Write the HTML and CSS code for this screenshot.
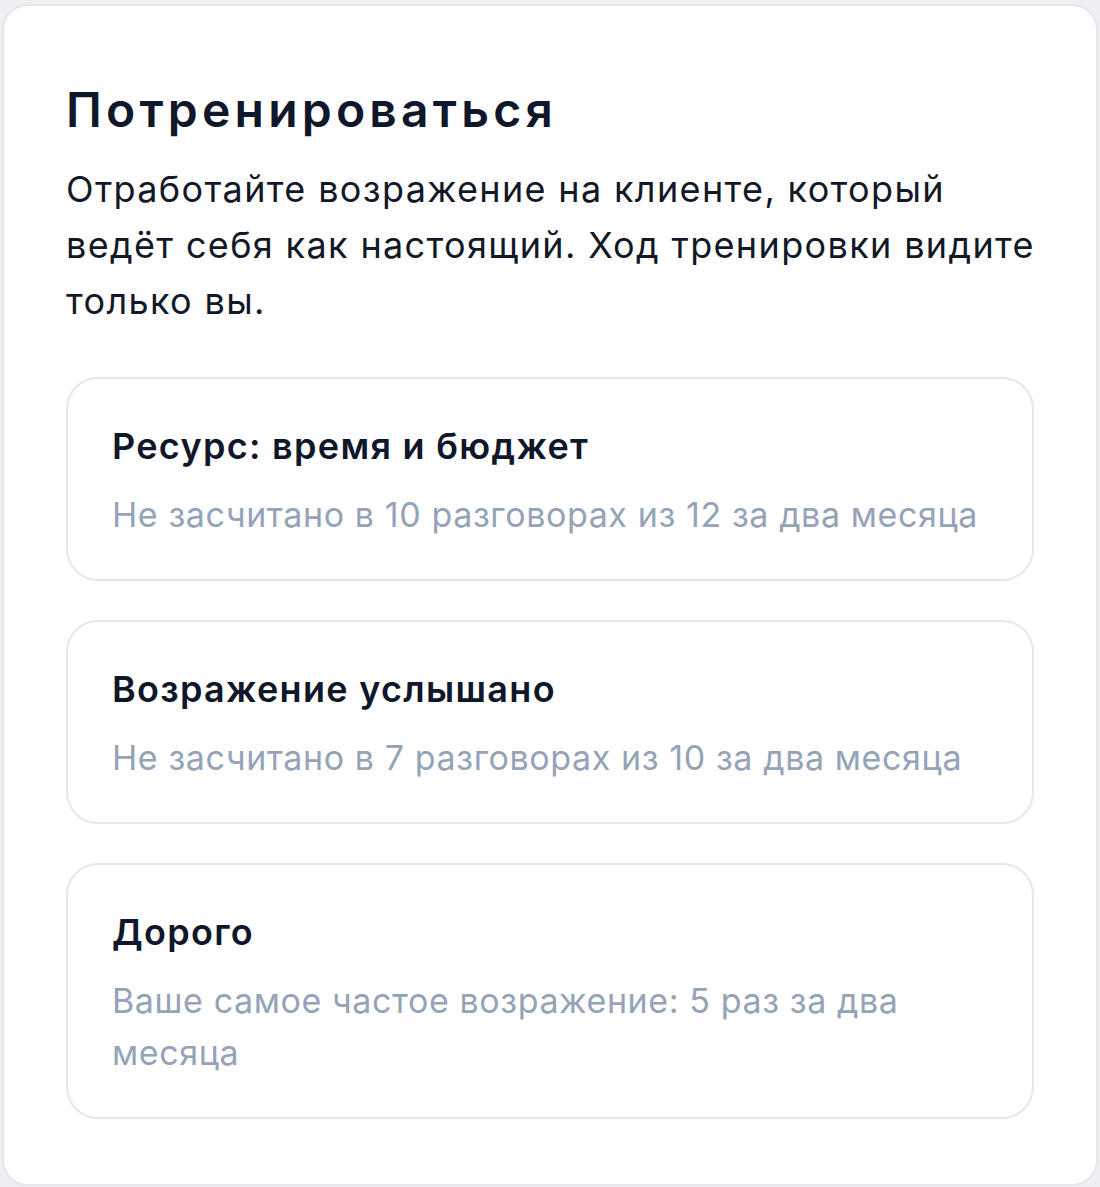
FILE: index.html
```html
<!DOCTYPE html>
<html lang="ru">
<head>
    <meta charset="UTF-8">
    <meta name="viewport" content="width=device-width, initial-scale=1.0">
    <title>Потренироваться</title>
    <link rel="stylesheet" href="styles.css">
</head>
<body>
    <div class="practice">
        <h2 class="practice-title">Потренироваться</h2>
        <p class="practice-text">Отработайте возражение на клиенте, который ведёт себя как настоящий. Ход тренировки видите только вы.</p>

        <div class="objections">
            <div class="objection">
                <h3>Ресурс: время и бюджет</h3>
                <p>Не засчитано в 10 разговорах из 12 за два месяца</p>
            </div>
            <div class="objection">
                <h3>Возражение услышано</h3>
                <p>Не засчитано в 7 разговорах из 10 за два месяца</p>
            </div>
            <div class="objection">
                <h3>Дорого</h3>
                <p>Ваше самое частое возражение: 5 раз за два месяца</p>
            </div>
        </div>
    </div>
</body>
</html>
```

FILE: styles.css
```css
body {
    margin: 0;
    padding: 4px 2px 5px;
    background-color: #eef0f3;
    font-family: Inter, "Noto Sans", sans-serif;
    color: #0f172a;
}
.practice {
    background: #ffffff;
    border: 2px solid #e4e7ec;
    border-radius: 26px;
    padding: 76px 62px 65px;
}
.practice-title {
    margin: 0;
    font-size: 48px;
    line-height: 56px;
    font-weight: 600;
    letter-spacing: 4.2px;
}
.practice-text {
    margin: 23px -6px 0 0;
    font-size: 36px;
    line-height: 56px;
    font-weight: 400;
    letter-spacing: 1.35px;
    color: #111827;
}
.objections {
    display: flex;
    flex-direction: column;
    gap: 39px;
    margin-top: 48px;
}
.objection {
    border: 2px solid #e4e7ec;
    border-radius: 32px;
    padding: 43px 44px 38px;
}
.objection h3 {
    margin: 0;
    font-size: 36px;
    line-height: 48px;
    font-weight: 600;
    letter-spacing: 1.3px;
}
.objection p {
    margin: 19px 0 0;
    font-size: 34px;
    line-height: 52px;
    letter-spacing: 0.6px;
    color: #94a3b8;
}
```
